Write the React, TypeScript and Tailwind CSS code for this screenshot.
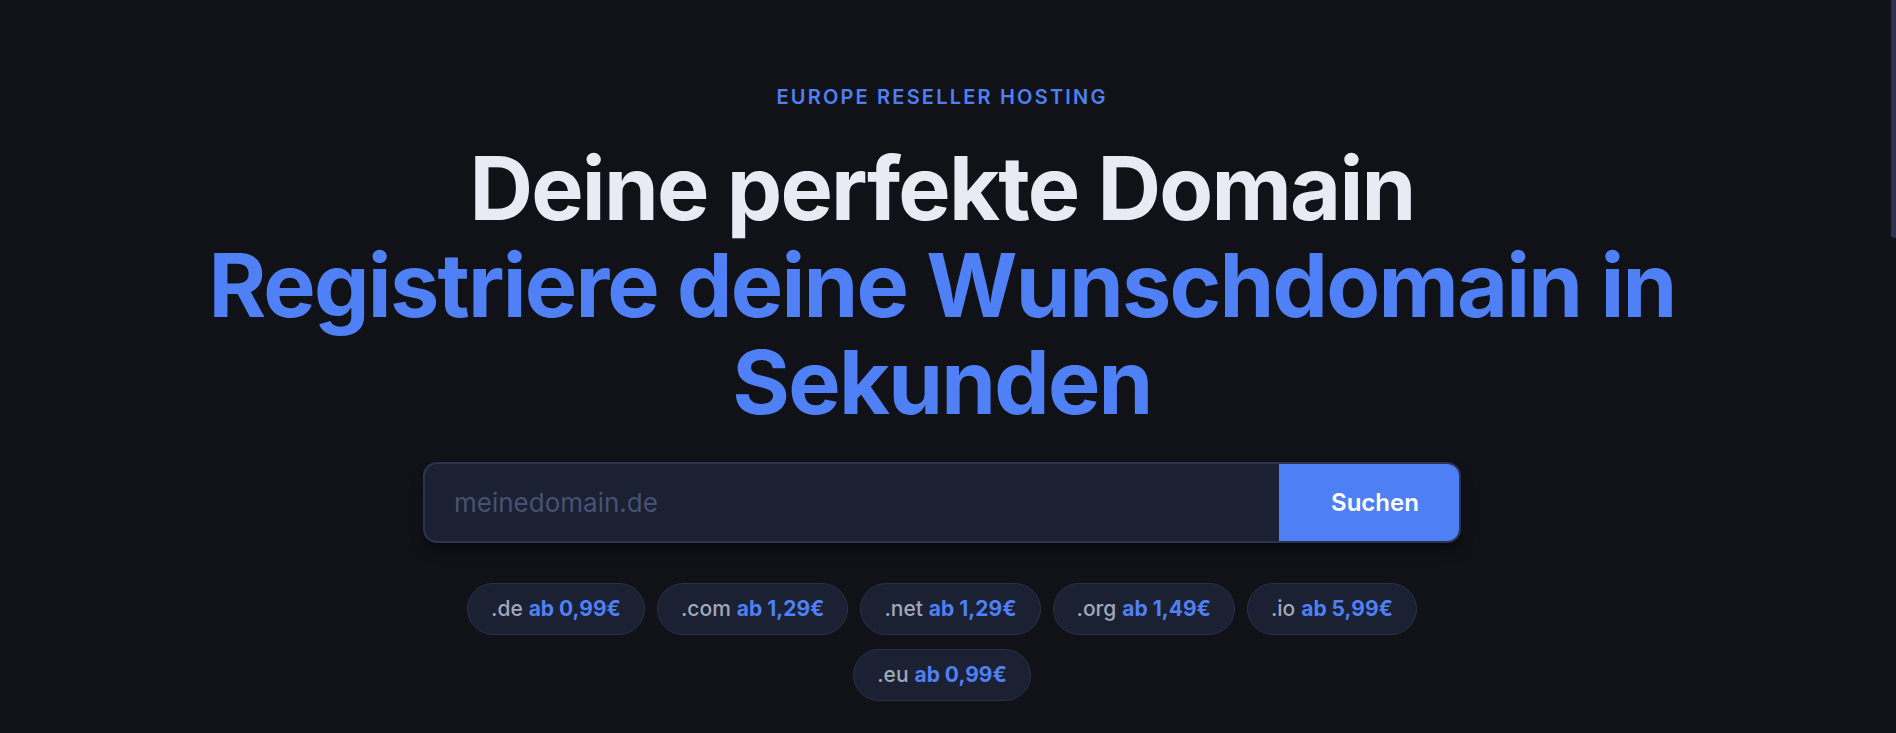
import React from 'react';

const TLDS = [
  { tld: '.de', price: '0,99€' },
  { tld: '.com', price: '1,29€' },
  { tld: '.net', price: '1,29€' },
  { tld: '.org', price: '1,49€' },
  { tld: '.io', price: '5,99€' },
  { tld: '.eu', price: '0,99€' },
];

export default function App() {
  return (
    <div className="flex h-screen overflow-hidden bg-[#111218] font-['Inter',sans-serif]">
      <section className="flex-1 px-6 pt-[83px]">
        <div className="flex flex-col items-center text-center">
          <p className="text-[20px] leading-7 font-semibold tracking-[0.11em] uppercase text-[#4f7ff3]">
            Europe Reseller Hosting
          </p>

          <h1 className="mt-[29px] text-[88px] leading-[1.1] font-bold tracking-[-0.02em] text-[#e8ebf3]">
            Deine perfekte Domain
            <br />
            <span className="text-[#4f80f5]">Registriere deine Wunschdomain in Sekunden</span>
          </h1>

          <form
            onSubmit={(e) => e.preventDefault()}
            className="mt-8 flex w-full max-w-[1038px] h-[81px] rounded-[14px] border-2 border-[#2b3350] bg-[#1b2033] overflow-hidden shadow-lg shadow-black/40"
          >
            <input
              type="text"
              placeholder="meinedomain.de"
              className="flex-1 bg-transparent pl-[29px] pr-4 text-[26px] text-[#e8ebf3] placeholder-[#475273] focus:outline-none"
            />
            <button
              type="submit"
              className="w-[180px] pl-3 bg-[#4f7ff5] text-[24px] font-semibold text-white cursor-pointer"
            >
              Suchen
            </button>
          </form>

          <div className="mt-10 flex max-w-[980px] flex-wrap justify-center gap-x-3 gap-y-[14px]">
            {TLDS.map((t) => (
              <div
                key={t.tld}
                className="rounded-full border border-[#2a3148] bg-[#1b2033] px-[23px] py-[11px] text-[21px] leading-7"
              >
                <span className="font-medium text-[#a0a8bc]">{t.tld}</span>{' '}
                <span className="font-bold text-[#4f80f5]">ab {t.price}</span>
              </div>
            ))}
          </div>
        </div>
      </section>

      {/* scrollbar track */}
      <div className="flex w-3 justify-end">
        <div className="h-[238px] w-[5px] rounded-bl-sm bg-[#2a3350]" />
      </div>
    </div>
  );
}
